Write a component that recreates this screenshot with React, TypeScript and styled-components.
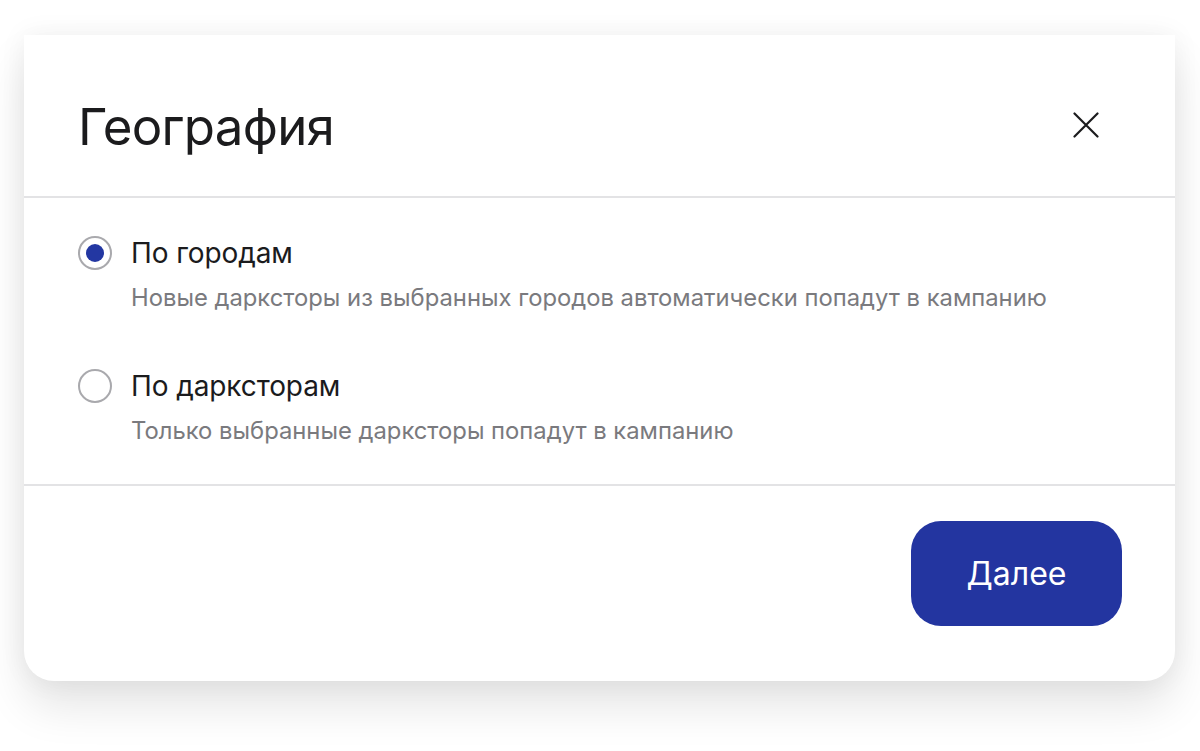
import React, { useState } from "react";
import styled, { createGlobalStyle } from "styled-components";

const GlobalStyle = createGlobalStyle`
  html, body {
    margin: 0;
    padding: 0;
    background: #ffffff;
    font-family: Inter, "Noto Sans", "Liberation Sans", sans-serif;
    -webkit-font-smoothing: antialiased;
  }
`;

const Page = styled.div`
  min-height: 751px;
  box-sizing: border-box;
  padding: 35px 25px 71px 24px;
`;

const Modal = styled.div`
  background: #ffffff;
  border-radius: 0 0 30px 30px;
  box-shadow: 0 26px 44px rgba(0, 0, 0, 0.1), 0 0 28px rgba(0, 0, 0, 0.06);
  display: flex;
  flex-direction: column;
`;

const Header = styled.div`
  height: 163px;
  box-sizing: border-box;
  display: flex;
  align-items: center;
  justify-content: space-between;
  padding: 22px 76px 0 54px;
  border-bottom: 2px solid #e3e3e5;
`;

const Title = styled.h1`
  margin: 0;
  font-size: 51px;
  font-weight: 400;
  color: #1b1b1d;
  letter-spacing: -0.75px;
`;

const CloseButton = styled.button`
  width: 26px;
  height: 26px;
  padding: 0;
  border: 0;
  background: none;
  display: flex;
  align-items: center;
  justify-content: center;
  cursor: pointer;
  margin-top: -4px;
`;

const Body = styled.div`
  padding: 38px 56px 39px 54px;
  display: flex;
  flex-direction: column;
  gap: 57px;
  border-bottom: 2px solid #e3e3e5;
`;

const Option = styled.label`
  display: grid;
  grid-template-columns: 34px 1fr;
  column-gap: 19px;
  cursor: pointer;
`;

const Radio = styled.span<{ $checked: boolean }>`
  width: 34px;
  height: 34px;
  box-sizing: border-box;
  border-radius: 50%;
  border: 2px solid #a9a9ad;
  display: flex;
  align-items: center;
  justify-content: center;

  &::after {
    content: "";
    width: 18px;
    height: 18px;
    border-radius: 50%;
    background: #2337a2;
    display: ${(p) => (p.$checked ? "block" : "none")};
  }
`;

const Label = styled.span`
  font-size: 28px;
  line-height: 34px;
  color: #1b1b1d;
  letter-spacing: -0.1px;
`;

const Description = styled.span`
  grid-column: 2;
  margin-top: 14px;
  font-size: 23.8px;
  line-height: 28px;
  color: #7a7a7e;
`;

const Footer = styled.div`
  display: flex;
  justify-content: flex-end;
  padding: 35px 53px 55px;
`;

const PrimaryButton = styled.button`
  width: 211px;
  height: 105px;
  border: 0;
  border-radius: 30px;
  background: #2335a0;
  color: #ffffff;
  font-family: inherit;
  font-size: 32px;
  font-weight: 400;
  cursor: pointer;
`;

const options = [
  {
    id: "cities",
    label: "По городам",
    description: "Новые дарксторы из выбранных городов автоматически попадут в кампанию",
  },
  {
    id: "stores",
    label: "По дарксторам",
    description: "Только выбранные дарксторы попадут в кампанию",
  },
];

export default function App() {
  const [value, setValue] = useState("cities");

  return (
    <>
      <GlobalStyle />
      <Page>
        <Modal>
          <Header>
            <Title>География</Title>
            <CloseButton aria-label="Закрыть">
              <svg width="26" height="26" viewBox="0 0 26 26" fill="none">
                <path d="M1.5 1.5L24.5 24.5M24.5 1.5L1.5 24.5" stroke="#1b1b1d" strokeWidth="2.2" strokeLinecap="round" />
              </svg>
            </CloseButton>
          </Header>
          <Body>
            {options.map((o) => (
              <Option key={o.id} onClick={() => setValue(o.id)}>
                <Radio $checked={value === o.id} />
                <Label>{o.label}</Label>
                <Description>{o.description}</Description>
              </Option>
            ))}
          </Body>
          <Footer>
            <PrimaryButton>Далее</PrimaryButton>
          </Footer>
        </Modal>
      </Page>
    </>
  );
}
